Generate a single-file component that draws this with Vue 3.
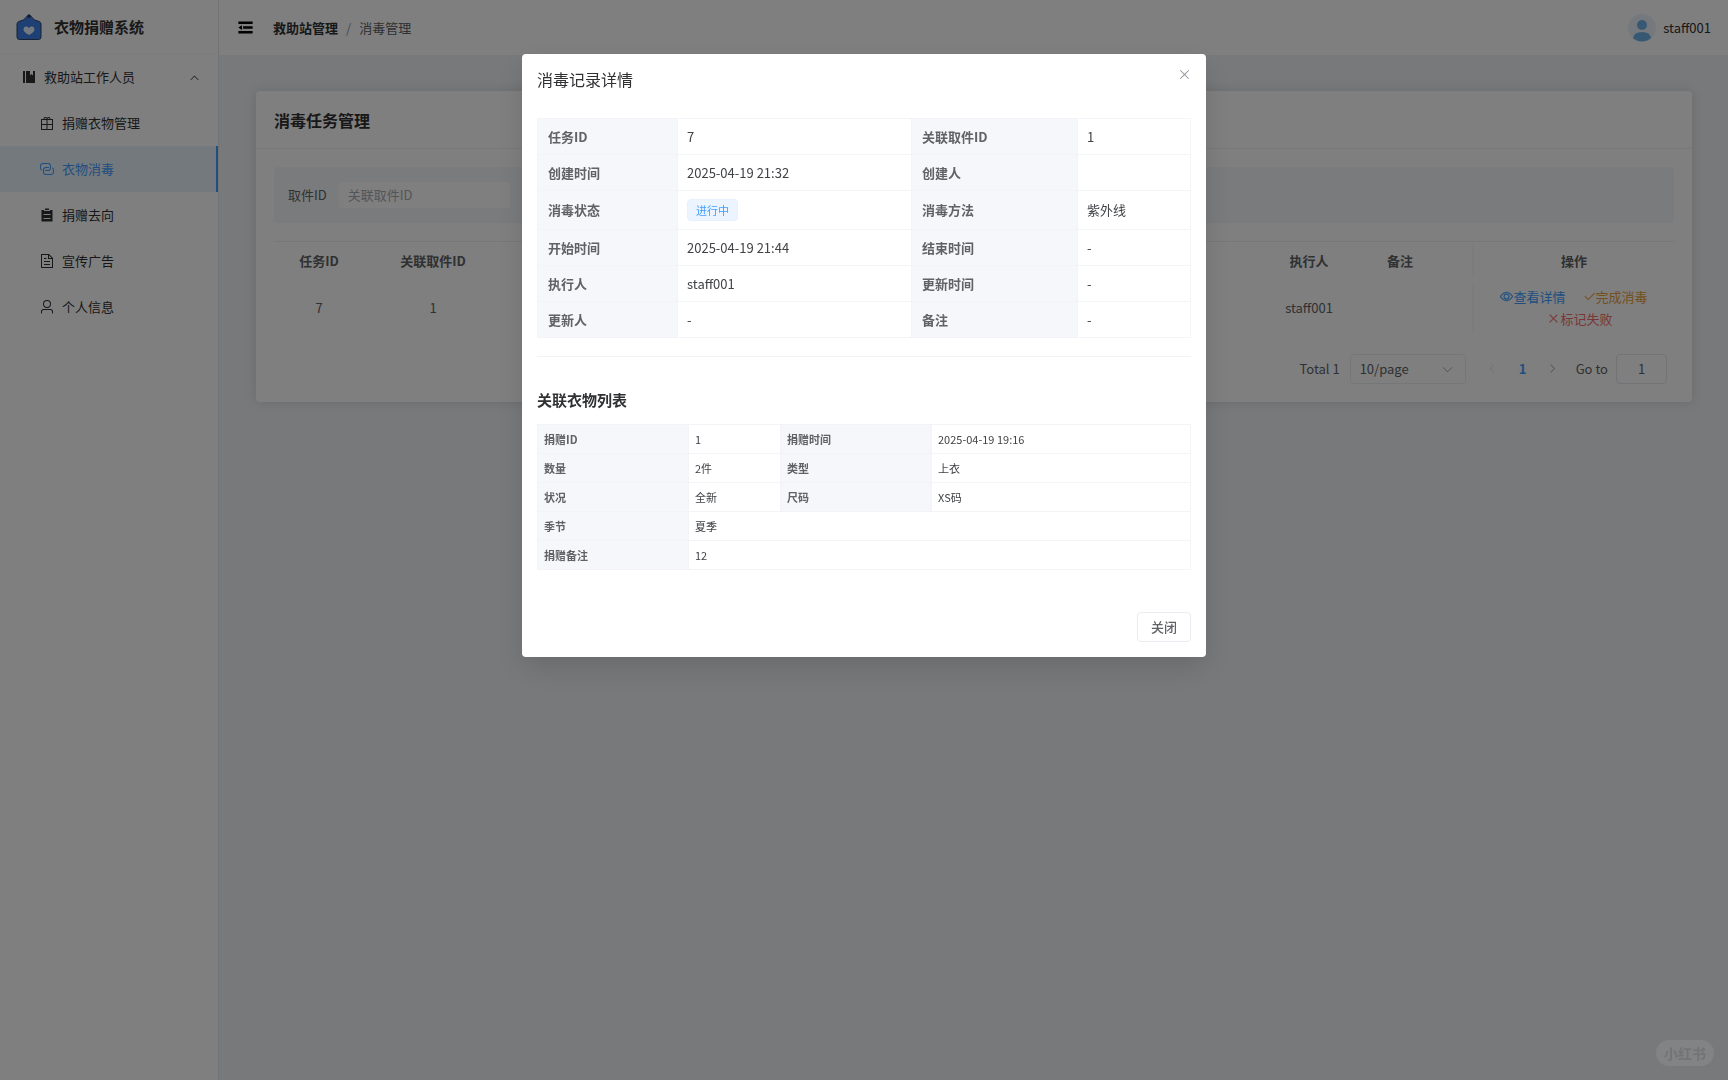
<template>
  <div class="layout">
    <!-- 侧边栏 -->
    <aside class="sidebar">
      <div class="logo">
        <svg class="logo-icon" viewBox="0 0 26 26">
          <path d="M3 7.500Q8 6.500 10.500 3L11.500 1.500A2 2 0 0 1 14.500 1.500L15.500 3Q18 6.500 23 7.500Q25 8 25 10V23Q25 25.500 22.500 25.500H3.500Q1 25.500 1 23V10Q1 8 3 7.500Z" fill="#3f80ea" stroke="#2f4668" stroke-width="1" />
          <circle cx="13" cy="2.500" r="1.500" fill="#24364f" />
          <path d="M13 21C9 19 7.500 17 7.500 15.200A2.800 2.800 0 0 1 13 14.500A2.800 2.800 0 0 1 18.500 15.200C18.500 17 17 19 13 21Z" fill="#e8f1ff" />
        </svg>
        <span>衣物捐赠系统</span>
      </div>
      <nav class="menu">
        <button class="menu-group" type="button" @click="opened = !opened">
          <svg class="icon menu-icon" viewBox="0 0 1024 1024"><path :d="icons.management" /></svg>
          <span>救助站工作人员</span>
          <svg class="icon menu-arrow" viewBox="0 0 1024 1024"><path :d="icons.arrowUp" /></svg>
        </button>
        <template v-if="opened">
          <a
            v-for="item in menus"
            :key="item.name"
            href="#"
            class="menu-item"
            :class="{ active: item.name === activeMenu }"
            @click.prevent="activeMenu = item.name"
          >
            <svg class="icon menu-icon" viewBox="0 0 1024 1024"><path :d="icons[item.icon]" /></svg>
            <span>{{ item.name }}</span>
          </a>
        </template>
      </nav>
    </aside>

    <div class="container">
      <!-- 顶栏 -->
      <header class="navbar">
        <button class="fold-btn" type="button" aria-label="fold">
          <svg class="icon" viewBox="0 0 1024 1024"><path :d="icons.fold" /></svg>
        </button>
        <div class="breadcrumb">
          <a href="#" class="crumb-link">救助站管理</a>
          <span class="separator">/</span>
          <span>消毒管理</span>
        </div>
        <div class="user">
          <svg class="avatar" viewBox="0 0 28 28">
            <circle cx="14" cy="14" r="14" fill="#eaf3fa" />
            <circle cx="14" cy="11" r="5" fill="#6fb1e6" />
            <path d="M5 24Q6 18 14 18T23 24Q19 27.500 14 27.500T5 24Z" fill="#6fb1e6" />
          </svg>
          <span>staff001</span>
        </div>
      </header>

      <main class="main">
        <section class="card">
          <h2 class="card-title">消毒任务管理</h2>
          <div class="card-body">
            <form class="search" @submit.prevent>
              <label for="pickup-id">取件ID</label>
              <input id="pickup-id" v-model="pickupId" type="text" placeholder="关联取件ID">
            </form>

            <table class="task-table">
              <colgroup>
                <col class="col-id">
                <col class="col-pickup">
                <col>
                <col class="col-executor">
                <col class="col-remark">
                <col class="col-actions">
              </colgroup>
              <thead>
                <tr>
                  <th>任务ID</th>
                  <th>关联取件ID</th>
                  <th></th>
                  <th>执行人</th>
                  <th class="remark">备注</th>
                  <th class="fixed">操作</th>
                </tr>
              </thead>
              <tbody>
                <tr>
                  <td>7</td>
                  <td>1</td>
                  <td></td>
                  <td>staff001</td>
                  <td class="remark"></td>
                  <td class="fixed">
                    <div class="actions">
                      <button v-for="act in actions" :key="act.text" type="button" :class="act.type">
                        <svg class="icon" viewBox="0 0 1024 1024"><path :d="icons[act.icon]" /></svg>
                        <span>{{ act.text }}</span>
                      </button>
                    </div>
                  </td>
                </tr>
              </tbody>
            </table>

            <div class="pagination">
              <span>Total 1</span>
              <div class="select-wrap">
                <select aria-label="page size">
                  <option>10/page</option>
                </select>
                <svg class="icon select-arrow" viewBox="0 0 1024 1024"><path :d="icons.arrowDown" /></svg>
              </div>
              <div class="pager">
                <button type="button" disabled aria-label="prev">
                  <svg class="icon" viewBox="0 0 1024 1024"><path :d="icons.arrowLeft" /></svg>
                </button>
                <button type="button" class="current">1</button>
                <button type="button" aria-label="next">
                  <svg class="icon" viewBox="0 0 1024 1024"><path :d="icons.arrowRight" /></svg>
                </button>
              </div>
              <label class="jump">Go to <input v-model="page" type="text"></label>
            </div>
          </div>
        </section>
      </main>
    </div>

    <!-- 详情弹窗 -->
    <div v-if="visible" class="overlay">
      <div class="dialog" role="dialog" aria-modal="true" aria-labelledby="dialog-title">
        <header class="dialog-header">
          <h3 id="dialog-title">消毒记录详情</h3>
          <button class="dialog-close" type="button" aria-label="close" @click="visible = false">
            <svg class="icon" viewBox="0 0 1024 1024"><path :d="icons.close" /></svg>
          </button>
        </header>

        <table class="desc">
          <colgroup>
            <col class="desc-c1">
            <col class="desc-c2">
            <col class="desc-c3">
            <col>
          </colgroup>
          <tbody>
            <tr v-for="row in detail" :key="row[0]">
              <th scope="row">{{ row[0] }}</th>
              <td>
                <span v-if="row[0] === '消毒状态'" class="tag">{{ row[1] }}</span>
                <template v-else>{{ row[1] }}</template>
              </td>
              <th scope="row">{{ row[2] }}</th>
              <td>{{ row[3] }}</td>
            </tr>
          </tbody>
        </table>

        <hr class="divider">

        <h4 class="sub-title">关联衣物列表</h4>
        <table class="desc small">
          <colgroup>
            <col class="small-c1">
            <col class="small-c2">
            <col class="small-c1">
            <col>
          </colgroup>
          <tbody>
            <tr v-for="row in clothes" :key="row[0]">
              <th scope="row">{{ row[0] }}</th>
              <td :colspan="row.length === 2 ? 3 : 1">{{ row[1] }}</td>
              <template v-if="row.length > 2">
                <th scope="row">{{ row[2] }}</th>
                <td>{{ row[3] }}</td>
              </template>
            </tr>
          </tbody>
        </table>

        <footer class="dialog-footer">
          <button type="button" @click="visible = false">关闭</button>
        </footer>
      </div>
    </div>

    <div class="watermark">小红书</div>
  </div>
</template>

<script setup>
import { ref } from 'vue'

const opened = ref(true)
const visible = ref(true)
const activeMenu = ref('衣物消毒')
const pickupId = ref('')
const page = ref('1')

const menus = [
  { name: '捐赠衣物管理', icon: 'present' },
  { name: '衣物消毒', icon: 'connection' },
  { name: '捐赠去向', icon: 'list' },
  { name: '宣传广告', icon: 'document' },
  { name: '个人信息', icon: 'user' }
]

const actions = [
  { text: '查看详情', icon: 'view', type: 'primary' },
  { text: '完成消毒', icon: 'check', type: 'warning' },
  { text: '标记失败', icon: 'close', type: 'danger' }
]

// 每行：标签、值、标签、值
const detail = [
  ['任务ID', '7', '关联取件ID', '1'],
  ['创建时间', '2025-04-19 21:32', '创建人', ''],
  ['消毒状态', '进行中', '消毒方法', '紫外线'],
  ['开始时间', '2025-04-19 21:44', '结束时间', '-'],
  ['执行人', 'staff001', '更新时间', '-'],
  ['更新人', '-', '备注', '-']
]

const clothes = [
  ['捐赠ID', '1', '捐赠时间', '2025-04-19 19:16'],
  ['数量', '2件', '类型', '上衣'],
  ['状况', '全新', '尺码', 'XS码'],
  ['季节', '夏季'],
  ['捐赠备注', '12']
]

const icons = {
  fold: 'M896 192H128v128h768V192zm0 256H384v128h512V448zm0 256H128v128h768V704zM320 384 128 512l192 128V384z',
  management: 'M576 128v288l96-96 96 96V128h128v768H320V128h256zm-448 0h128v768H128V128z',
  present: 'M480 896V640H192v-64h288V320H192v576h288zm64 0h288V640H544v256zm0-320h288V320H544v256zM128 256h768v672a32 32 0 0 1-32 32H160a32 32 0 0 1-32-32V256zM288 256a128 128 0 0 1 224-85 128 128 0 0 1 224 85h-64a64 64 0 0 0-128 0h-64a64 64 0 0 0-128 0z',
  connection: 'M640 384v64H448a128 128 0 0 0-128 128v128a128 128 0 0 0 128 128h320a128 128 0 0 0 128-128V576a128 128 0 0 0-64-110.848V394.880c74.560 26.368 128 97.472 128 181.056v128a192 192 0 0 1-192 192H448a192 192 0 0 1-192-192V576a192 192 0 0 1 192-192h192zM384 640v-64h192a128 128 0 0 0 128-128V320a128 128 0 0 0-128-128H256a128 128 0 0 0-128 128v128a128 128 0 0 0 64 110.848v70.272A192.064 192.064 0 0 1 64 448V320a192 192 0 0 1 192-192h320a192 192 0 0 1 192 192v128a192 192 0 0 1-192 192H384z',
  list: 'M704 192h160v736H160V192h160v64h384v-64zM288 512h448v-64H288v64zm0 256h448v-64H288v64zm96-576V96h256v96H384z',
  document: 'M832 384H576V128H192v768h640V384zm-26.496-64L640 154.496V320h165.504zM160 64h480l256 256v608a32 32 0 0 1-32 32H160a32 32 0 0 1-32-32V96a32 32 0 0 1 32-32zm160 448h384v64H320v-64zm0-192h160v64H320v-64zm0 384h384v64H320v-64z',
  user: 'M512 512a192 192 0 1 0 0-384 192 192 0 0 0 0 384zm0 64a256 256 0 1 1 0-512 256 256 0 0 1 0 512zm320 320v-96a96 96 0 0 0-96-96H288a96 96 0 0 0-96 96v96a32 32 0 1 1-64 0v-96a160 160 0 0 1 160-160h448a160 160 0 0 1 160 160v96a32 32 0 1 1-64 0z',
  view: 'M512 160c320 0 512 352 512 352S832 864 512 864 0 512 0 512s192-352 512-352zm0 64c-225.280 0-384.128 208.064-436.800 288 52.608 79.872 211.456 288 436.800 288 225.280 0 384.128-208.064 436.800-288-52.608-79.872-211.456-288-436.800-288zm0 64a224 224 0 1 1 0 448 224 224 0 0 1 0-448zm0 64a160.192 160.192 0 0 0-160 160c0 88.192 71.744 160 160 160s160-71.808 160-160-71.744-160-160-160z',
  check: 'M406.656 706.944 195.840 496.256a32 32 0 1 0-45.248 45.248l256 256 512-512a32 32 0 0 0-45.248-45.248L406.592 706.944z',
  close: 'M764.288 214.592 512 466.880 259.712 214.592a31.936 31.936 0 0 0-45.120 45.120L466.752 512 214.528 764.224a31.936 31.936 0 1 0 45.120 45.184L512 557.184l252.288 252.288a31.936 31.936 0 0 0 45.120-45.120L557.120 512.064l252.288-252.352a31.936 31.936 0 1 0-45.120-45.184z',
  arrowUp: 'm488.832 344.320-339.840 356.672a32 32 0 0 0 0 44.160l.384.384a29.440 29.440 0 0 0 42.688 0l320-335.872 319.872 335.872a29.440 29.440 0 0 0 42.688 0l.384-.384a32 32 0 0 0 0-44.160L535.168 344.320a32 32 0 0 0-46.336 0z',
  arrowDown: 'M831.872 340.864 512 652.672 192.128 340.864a30.592 30.592 0 0 0-42.752 0 29.120 29.120 0 0 0 0 41.600L489.664 714.240a32 32 0 0 0 44.672 0l340.288-331.712a29.120 29.120 0 0 0 0-41.728 30.592 30.592 0 0 0-42.752 0z',
  arrowLeft: 'M609.408 149.376 277.760 489.600a32 32 0 0 0 0 44.672l331.648 340.352a29.120 29.120 0 0 0 41.728 0 30.592 30.592 0 0 0 0-42.752L339.264 511.936l311.872-319.872a30.592 30.592 0 0 0 0-42.688 29.120 29.120 0 0 0-41.728 0z',
  arrowRight: 'M340.864 149.312a30.592 30.592 0 0 0 0 42.752L652.736 512 340.864 831.872a30.592 30.592 0 0 0 0 42.752 29.120 29.120 0 0 0 41.728 0L714.240 534.336a32 32 0 0 0 0-44.672L382.592 149.376a29.120 29.120 0 0 0-41.728 0z'
}
</script>

<style>
body {
  margin: 0;
  background: #f0f2f5;
}
</style>

<style scoped>
.layout {
  display: flex;
  min-height: 100vh;
  font-family: "Noto Sans CJK SC", sans-serif;
  font-size: 13px;
  line-height: 20px;
  color: #303133;
}

.layout *,
.layout *::before {
  box-sizing: border-box;
}

button,
input,
select {
  font: inherit;
  color: inherit;
  margin: 0;
}

button {
  padding: 0;
  border: 0;
  background: none;
  cursor: pointer;
}

a {
  color: inherit;
  text-decoration: none;
}

h2,
h3,
h4 {
  margin: 0;
}

.icon {
  width: 1em;
  height: 1em;
  fill: currentColor;
  flex-shrink: 0;
}

/* 侧边栏 */
.sidebar {
  width: 219px;
  flex-shrink: 0;
  background: #fff;
  border-right: 1px solid #e4e7ed;
}

.logo {
  display: flex;
  align-items: center;
  gap: 12px;
  height: 54px;
  padding-left: 16px;
  border-bottom: 1px solid #f8f9fa;
  font-size: 15px;
  font-weight: 700;
}

.logo-icon {
  width: 26px;
  height: 26px;
}

.menu {
  display: flex;
  flex-direction: column;
}

.menu-group,
.menu-item {
  display: flex;
  align-items: center;
  gap: 7px;
  height: 46px;
  padding: 0 18px 0 21px;
}

.menu-item {
  padding-left: 39px;
}

.menu-icon {
  font-size: 16px;
}

.menu-arrow {
  margin-left: auto;
  font-size: 11px;
}

.menu-item.active {
  color: #409eff;
  background: #e8f2fc;
  border-right: 2px solid #409eff;
}

/* 顶栏 */
.container {
  flex: 1;
  min-width: 0;
  background: #f0f2f5;
}

.navbar {
  display: flex;
  align-items: center;
  height: 55px;
  padding: 0 17px;
  background: #fff;
}

.fold-btn {
  display: flex;
  font-size: 19px;
  color: #000;
}

.breadcrumb {
  display: flex;
  gap: 8px;
  margin-left: 18px;
  color: #606266;
}

.crumb-link {
  font-weight: 700;
  color: #303133;
}

.separator {
  color: #909399;
}

.user {
  display: flex;
  align-items: center;
  gap: 7px;
  margin-left: auto;
}

.avatar {
  width: 28px;
  height: 28px;
}

.main {
  padding: 36px 36px 36px 37px;
}

.card {
  background: #fff;
  border-radius: 4px;
  box-shadow: 0 0 12px rgba(0, 0, 0, 0.12);
}

.card-title {
  padding: 17px 18px 16px;
  border-bottom: 1px solid #f0f2f5;
  font-size: 16px;
  line-height: 24px;
}

.card-body {
  padding: 18px;
}

.search {
  display: flex;
  align-items: center;
  gap: 11px;
  margin-bottom: 18px;
  padding: 14px;
  background: #f5f7fa;
  border-radius: 4px;
}

.search label {
  color: #606266;
}

.search input {
  width: 173px;
  height: 28px;
  padding: 0 9px 2px;
  border: 1px solid #f6f7f9;
  border-radius: 4px;
  background: #fff;
}

.search input::placeholder {
  color: #a8abb2;
  opacity: 1;
}

.task-table {
  width: 100%;
  table-layout: fixed;
  border-collapse: collapse;
  border-top: 1px solid #ebeef5;
  color: #606266;
  text-align: center;
}

.col-id {
  width: 90px;
}

.col-pickup {
  width: 138px;
}

.col-executor {
  width: 92px;
}

.col-remark {
  width: 119px;
}

.col-actions {
  width: 200px;
}

.task-table th {
  height: 38px;
  padding: 0;
  font-weight: 700;
}

.task-table td {
  height: 56px;
  padding: 0;
}

.task-table .remark {
  padding-right: 29px;
}

.task-table .fixed {
  box-shadow: -3px 0 4px -2px rgba(0, 0, 0, 0.06);
}

.actions {
  display: flex;
  flex-wrap: wrap;
  justify-content: center;
  gap: 2px 5px;
  padding: 0 11px;
}

.actions button {
  display: flex;
  align-items: center;
}

.actions .icon {
  stroke: currentColor;
  stroke-width: 30px;
}

.actions button + button {
  margin-left: 12px;
}

.primary {
  color: #409eff;
}

.warning {
  color: #e6a23c;
}

.danger {
  color: #f56c6c;
}

.pagination {
  display: flex;
  align-items: center;
  justify-content: flex-end;
  margin-top: 18px;
  padding-right: 7px;
  color: #606266;
}

.select-wrap {
  position: relative;
  width: 116px;
  margin-left: 10px;
}

.select-wrap select {
  display: block;
  width: 100%;
  height: 30px;
  padding: 0 9px;
  border: 1px solid #ebedf1;
  border-radius: 4px;
  background: #fff;
  appearance: none;
}

.select-arrow {
  position: absolute;
  top: 9px;
  right: 12px;
  color: #a8abb2;
}

.pager {
  display: flex;
  margin-left: 12px;
}

.pager button {
  display: flex;
  align-items: center;
  justify-content: center;
  width: 30px;
  height: 30px;
}

.pager .icon {
  font-size: 11px;
  color: #909399;
}

.pager button:disabled .icon {
  color: #dcdfe6;
}

.pager .current {
  font-weight: 700;
  color: #409eff;
}

.jump {
  display: flex;
  align-items: center;
  gap: 8px;
  margin-left: 8px;
}

.jump input {
  width: 51px;
  height: 30px;
  padding: 0 4px;
  border: 1px solid #e4e7ed;
  border-radius: 4px;
  background: #fff;
  text-align: center;
}

/* 弹窗 */
.overlay {
  position: fixed;
  inset: 0;
  z-index: 2000;
  overflow: auto;
  background: rgba(0, 0, 0, 0.5);
}

.dialog {
  width: 684px;
  max-width: 100%;
  margin: 54px auto;
  padding: 15px;
  background: #fff;
  border-radius: 4px;
  box-shadow: 0 11px 30px rgba(0, 0, 0, 0.12);
}

.dialog-header {
  display: flex;
  justify-content: space-between;
  margin-bottom: 29px;
}

.dialog-header h3 {
  font-size: 16px;
  font-weight: 400;
  line-height: 20px;
}

.dialog-close {
  display: flex;
  align-items: center;
  justify-content: center;
  width: 14px;
  height: 10px;
  font-size: 15px;
  color: #909399;
}

.desc {
  width: 100%;
  table-layout: fixed;
  border-collapse: collapse;
}

.desc th,
.desc td {
  height: 36px;
  padding: 7px 10px;
  border: 1px solid #f2f4f8;
  text-align: left;
  font-weight: 400;
}

.desc td {
  padding: 7px 9px;
  color: #404246;
}

.desc th {
  background: #f5f7fa;
  color: #606266;
  font-weight: 700;
}

.desc-c1 {
  width: 140px;
}

.desc-c2 {
  width: 234px;
}

.desc-c3 {
  width: 166px;
}

.tag {
  display: block;
  width: max-content;
  margin: 1px 0;
  padding: 0 8px;
  border: 1px solid #e6f1fd;
  border-radius: 4px;
  background: #ecf5ff;
  color: #409eff;
  font-size: 11px;
}

.divider {
  height: 1px;
  margin: 18px 0 32px;
  border: 0;
  background: #f0f2f5;
}

.sub-title {
  margin-bottom: 13px;
  font-size: 15px;
  line-height: 22px;
}

.desc.small {
  font-size: 11px;
  line-height: 16px;
}

.desc.small th,
.desc.small td {
  height: 29px;
  padding: 6px;
}

.small-c1 {
  width: 151px;
}

.small-c2 {
  width: 92px;
}

.dialog-footer {
  display: flex;
  justify-content: flex-end;
  margin-top: 42px;
}

.dialog-footer button {
  height: 30px;
  padding: 0 13px;
  border: 1px solid #e9ebf0;
  border-radius: 4px;
  color: #606266;
  font-weight: 500;
}

.watermark {
  position: fixed;
  right: 14px;
  bottom: 14px;
  z-index: 2001;
  padding: 3px 8px;
  border-radius: 14px;
  background: rgba(255, 255, 255, 0.08);
  color: rgba(90, 93, 96, 0.4);
  font-size: 14px;
  font-weight: 700;
}
</style>
